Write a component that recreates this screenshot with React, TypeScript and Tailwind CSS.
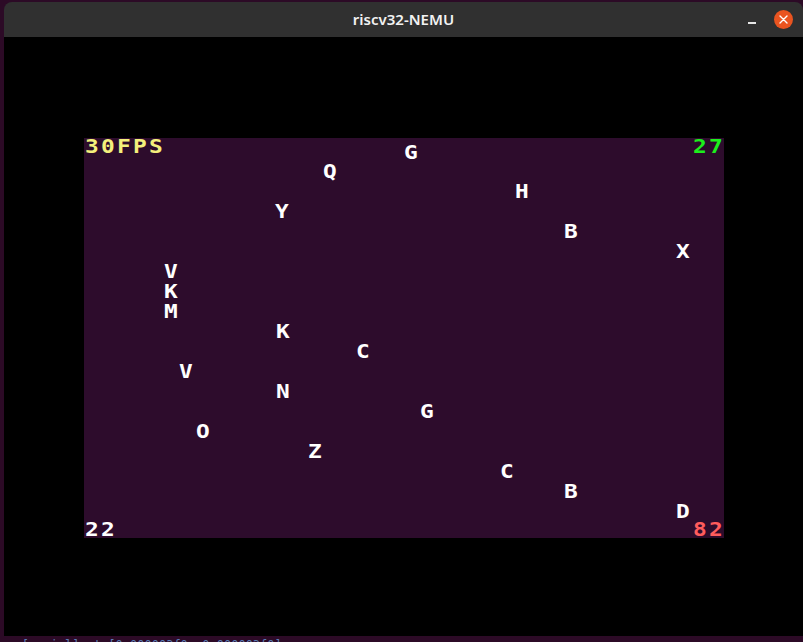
import React from 'react';

// falling letters: centre x/y on screen (canvas origin = 84,138)
const letters: { ch: string; x: number; y: number }[] = [
	{ ch: 'G', x: 411, y: 152 },
	{ ch: 'Q', x: 330, y: 171 },
	{ ch: 'H', x: 522, y: 191 },
	{ ch: 'Y', x: 282, y: 211 },
	{ ch: 'B', x: 571, y: 231 },
	{ ch: 'X', x: 683, y: 251 },
	{ ch: 'V', x: 171, y: 271 },
	{ ch: 'K', x: 171, y: 291 },
	{ ch: 'M', x: 171, y: 311 },
	{ ch: 'K', x: 283, y: 331 },
	{ ch: 'C', x: 363, y: 351 },
	{ ch: 'V', x: 186, y: 371 },
	{ ch: 'N', x: 283, y: 391 },
	{ ch: 'G', x: 427, y: 411 },
	{ ch: 'O', x: 203, y: 431 },
	{ ch: 'Z', x: 315, y: 451 },
	{ ch: 'C', x: 507, y: 471 },
	{ ch: 'B', x: 571, y: 491 },
	{ ch: 'D', x: 683, y: 511 },
];

const CANVAS_X = 84;
const CANVAS_Y = 138;

const cell = "inline-block w-[16px] h-[20px] text-center font-['DejaVu_Sans_Mono',monospace] font-bold text-[19px] leading-[20px] scale-x-[1.2]";

function PixelText({ text, color }: { text: string; color: string }) {
	return (
		<span className={`flex ${color}`}>
			{text.split('').map((c, i) => (
				<span key={i} className={cell}>
					{c}
				</span>
			))}
		</span>
	);
}

function Canvas() {
	return (
		<div className="relative w-[640px] h-[400px] bg-[#2d0c2c]">
			<div className="absolute left-0 right-0 top-[-2px] flex justify-between">
				<PixelText text="30FPS" color="text-[#f4f07c]" />
				<PixelText text="27" color="text-[#1cf01c]" />
			</div>
			{letters.map((l, i) => (
				<span
					key={i}
					className={`absolute ${cell} text-white`}
					style={{ left: l.x - CANVAS_X - 8, top: l.y - CANVAS_Y - 10 }}>
					{l.ch}
				</span>
			))}
			<div className="absolute left-0 right-0 bottom-[-1px] flex justify-between">
				<PixelText text="22" color="text-white" />
				<PixelText text="82" color="text-[#ff5c5c]" />
			</div>
		</div>
	);
}

export default function App() {
	return (
		<div className="w-[803px] h-[642px] bg-[#2c0a26] flex flex-col overflow-hidden">
			<div className="h-[2px] shrink-0" />
			<div className="flex h-[634px] shrink-0">
				<div className="w-[4px] shrink-0" />
				<div className="flex-1 flex flex-col rounded-t-[8px] overflow-hidden">
					{/* title bar */}
					<div className="relative h-[35px] shrink-0 bg-[#303030] flex items-center justify-center">
						<span className="font-['Noto_Sans',sans-serif] font-semibold text-[15px] text-[#f2f2f2]">
							riscv32-NEMU
						</span>
						<span className="absolute left-[744px] top-[20px] w-[8px] h-[1.5px] bg-[#e6e6e6]" />
						<span className="absolute left-[770px] top-[8px] w-[19px] h-[19px] rounded-full bg-[#e95420] flex items-center justify-center">
							<svg width="9" height="9" viewBox="0 0 9 9">
								<path d="M1 1 L8 8 M8 1 L1 8" stroke="#fff" strokeWidth="1.4" strokeLinecap="round" />
							</svg>
						</span>
					</div>
					{/* body */}
					<div className="flex-1 bg-black pl-[80px] pt-[101px]">
						<Canvas />
					</div>
				</div>
			</div>
			<div className="h-[6px] shrink-0 overflow-hidden">
				<div className="mt-[2px] font-['DejaVu_Sans_Mono',monospace] text-[12px] leading-[14px] text-[#5b7db5] whitespace-nowrap">
					ss  [serial] at [0x000003f0, 0x000003f0]
				</div>
			</div>
		</div>
	);
}
